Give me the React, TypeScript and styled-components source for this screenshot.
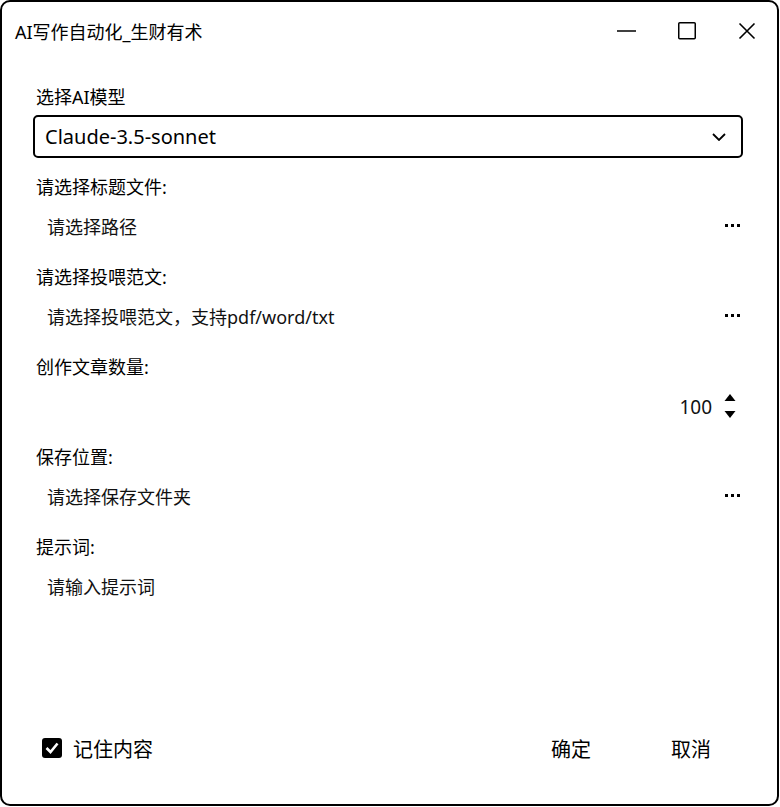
import { ReactElement } from 'react';
import styled, { createGlobalStyle } from 'styled-components';

const GlobalStyle = createGlobalStyle`
    html, body {
        margin: 0;
        padding: 0;
        background: #fff;
    }
    body {
        font-family: 'Noto Sans', 'Noto Sans CJK SC', sans-serif;
        color: #000;
    }
`;

const Window = styled.div`
    box-sizing: border-box;
    width: 779px;
    height: 806px;
    border: 2px solid #000;
    border-radius: 10px;
    display: flex;
    flex-direction: column;
    background: #fff;
    overflow: hidden;
`;

const TitleBar = styled.div`
    display: flex;
    align-items: center;
    height: 58px;
    padding-left: 13px;
`;

const Title = styled.div`
    flex: 1;
    font-size: 18px;
    line-height: 24px;
    margin-top: 2px;
`;

const Controls = styled.div`
    display: flex;
    height: 100%;
`;

const ControlButton = styled.div`
    width: 60px;
    height: 100%;
    display: flex;
    align-items: center;
    justify-content: center;
`;

const Content = styled.div`
    flex: 1;
    display: flex;
    flex-direction: column;
    padding: 22px 34px 31px 31px;
`;

const Label = styled.div`
    font-size: 18px;
    line-height: 30px;
    height: 30px;
    padding-left: 3px;
`;

const Select = styled.div`
    box-sizing: border-box;
    height: 43px;
    margin: 3px 0 14px;
    border: 2px solid #000;
    border-radius: 5px;
    display: flex;
    align-items: center;
    justify-content: space-between;
    padding: 0 15px 0 10px;
    font-size: 20px;
`;

const Field = styled.div`
    display: flex;
    flex-direction: column;
`;

const InputRow = styled.div<{ $align?: 'between' | 'end' }>`
    height: 40px;
    margin: 4px 0 16px;
    display: flex;
    align-items: center;
    justify-content: ${(p) => (p.$align === 'end' ? 'flex-end' : 'space-between')};
    padding: 0 2px 0 14px;
    font-size: 18px;
    color: #111;
`;

const NumberValue = styled.span`
    font-size: 19px;
    margin-right: 11px;
    margin-top: 1px;
`;

const Spinner = styled.div`
    width: 14px;
    height: 30px;
    margin-right: 4px;
    display: flex;
`;

const PromptBox = styled.div`
    height: 120px;
    margin-top: 6px;
    padding: 6px 14px;
    box-sizing: border-box;
    font-size: 18px;
    line-height: 26px;
    color: #111;
`;

const Footer = styled.div`
    margin-top: auto;
    height: 50px;
    display: flex;
    align-items: center;
`;

const Remember = styled.label`
    display: flex;
    align-items: center;
    gap: 11px;
    padding-left: 9px;
    font-size: 20px;
    flex: 1;
`;

const Button = styled.div`
    width: 104px;
    height: 30px;
    display: flex;
    align-items: center;
    justify-content: center;
    font-size: 20px;
    & + & {
        margin-left: 16px;
    }
`;

function Dots(): ReactElement {
    return (
        <svg width="16" height="4" viewBox="0 0 16 4">
            <rect x="0" y="0" width="3" height="3" fill="#000" />
            <rect x="6" y="0" width="3" height="3" fill="#000" />
            <rect x="12" y="0" width="3" height="3" fill="#000" />
        </svg>
    );
}

const fields = [
    { label: '请选择标题文件:', placeholder: '请选择路径' },
    { label: '请选择投喂范文:', placeholder: '请选择投喂范文，支持pdf/word/txt' },
];

function App(): ReactElement {
    return (
        <>
            <GlobalStyle />
            <Window>
                <TitleBar>
                    <Title>AI写作自动化_生财有术</Title>
                    <Controls>
                        <ControlButton>
                            <svg width="20" height="20" viewBox="0 0 20 20">
                                <line x1="0" y1="10" x2="19" y2="10" stroke="#000" strokeWidth="1.5" />
                            </svg>
                        </ControlButton>
                        <ControlButton>
                            <svg width="20" height="20" viewBox="0 0 20 20">
                                <rect x="1.75" y="1.75" width="16.5" height="16" rx="1" fill="none" stroke="#000" strokeWidth="1.5" />
                            </svg>
                        </ControlButton>
                        <ControlButton>
                            <svg width="20" height="20" viewBox="0 0 20 20">
                                <path d="M2.5 2.5 L17.5 17.5 M17.5 2.5 L2.5 17.5" stroke="#000" strokeWidth="1.6" />
                            </svg>
                        </ControlButton>
                    </Controls>
                </TitleBar>
                <Content>
                    <Label>选择AI模型</Label>
                    <Select>
                        <span>Claude-3.5-sonnet</span>
                        <svg width="14" height="8" viewBox="0 0 14 8">
                            <polyline points="1,1 7,7 13,1" fill="none" stroke="#000" strokeWidth="1.8" />
                        </svg>
                    </Select>
                    {fields.map((f) => (
                        <Field key={f.label}>
                            <Label>{f.label}</Label>
                            <InputRow>
                                <span>{f.placeholder}</span>
                                <Dots />
                            </InputRow>
                        </Field>
                    ))}
                    <Field>
                        <Label>创作文章数量:</Label>
                        <InputRow $align="end">
                            <NumberValue>100</NumberValue>
                            <Spinner>
                                <svg width="14" height="30" viewBox="0 0 14 30">
                                    <path d="M7 3 L12.5 10 L1.5 10 Z" fill="#000" />
                                    <path d="M1.5 20 L12.5 20 L7 27 Z" fill="#000" />
                                </svg>
                            </Spinner>
                        </InputRow>
                    </Field>
                    <Field>
                        <Label>保存位置:</Label>
                        <InputRow>
                            <span>请选择保存文件夹</span>
                            <Dots />
                        </InputRow>
                    </Field>
                    <Field>
                        <Label>提示词:</Label>
                        <PromptBox>请输入提示词</PromptBox>
                    </Field>
                    <Footer>
                        <Remember>
                            <svg width="20" height="20" viewBox="0 0 20 20">
                                <rect x="0" y="0" width="20" height="20" rx="3" fill="#000" />
                                <polyline points="4.5,10 8.5,14 15.5,5.5" fill="none" stroke="#fff" strokeWidth="2.6" />
                            </svg>
                            <span>记住内容</span>
                        </Remember>
                        <Button>确定</Button>
                        <Button>取消</Button>
                    </Footer>
                </Content>
            </Window>
        </>
    );
}

export default App;
